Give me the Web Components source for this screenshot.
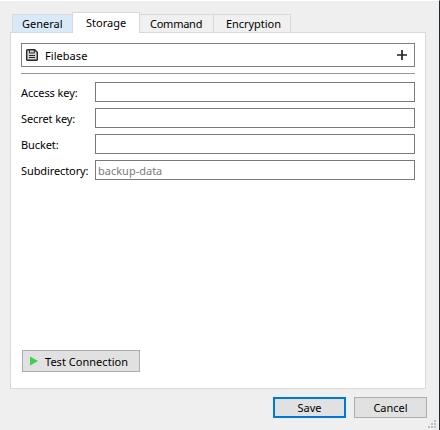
<!DOCTYPE html>
<html lang="en"><head><meta charset="utf-8"><title>Storage</title>
<style>html,body{margin:0;height:100%;overflow:hidden}body{font:11px/16px "Noto Sans","Open Sans",sans-serif;color:#000;background:#efefef}</style></head>
<body><storage-dialog></storage-dialog>
<script>
const define=(name,html,setup)=>customElements.define(name,class extends HTMLElement{
  connectedCallback(){
    if(this.shadowRoot)return;
    this.attachShadow({mode:"open"}).innerHTML=html;
    if(setup)setup(this,this.shadowRoot);
  }
});

define("tab-item",`<style>
:host{display:block;box-sizing:border-box;height:18px;border:1px solid #d9d9d9;border-bottom:0;margin-left:-1px;padding:1px 0 0 var(--pad,12px);background:#f0f0f0;white-space:nowrap}
:host([hot]){background:#d8eaf9;margin-left:0}
:host([selected]){height:21px;background:#fff;margin-bottom:-1px;padding-top:2px;z-index:1}
</style><slot></slot>`);

define("tab-strip",`<style>
:host{display:flex;align-items:flex-end;height:20px;padding-left:2px}
</style><slot></slot>`);

define("account-picker",`<style>
:host{display:flex;align-items:center;box-sizing:border-box;height:24px;border:1px solid #7c808a;padding:0 7px 0 4px}
span{flex:1;margin-left:7px;padding-top:2px;letter-spacing:.05px}
svg{display:block}
</style>
<svg width="12" height="12" viewBox="0 0 12 12"><path d="M1.6.7h7.1l2.6 2.6v7.1q0 .9-.9.9H1.6q-.9 0-.9-.9V1.6q0-.9.9-.9Z" fill="#d4d4d4" stroke="#292929" stroke-width="1.4"/><path d="M3.5 1v3h4.8V1M3 6.5h6M3 8.5h6" fill="none" stroke="#292929"/></svg>
<span><slot></slot></span>
<svg width="10" height="10" viewBox="0 0 10 10"><path d="M5 0v10M0 5h10" stroke="#222" stroke-width="1.7"/></svg>`);

define("field-row",`<style>
:host{display:flex;height:20px}
label{width:74px;padding-top:3px;box-sizing:border-box;white-space:nowrap;letter-spacing:-.1px}
.box{flex:1;box-sizing:border-box;border:1px solid #7a7a7a;background:#fff;padding:2px;color:#7b7b7b}
</style><label></label><div class="box"><slot></slot></div>`,(host,root)=>{root.querySelector("label").textContent=host.getAttribute("label")});

define("push-button",`<style>
:host{display:flex;align-items:center;justify-content:center;box-sizing:border-box;width:73px;height:21px;border:1px solid #adadad;background:#e1e1e1;padding-top:1px;white-space:nowrap}
:host([primary]){border:2px solid #0078d7}
:host([wide]){width:118px;height:22px;justify-content:flex-start;padding-left:7px;padding-top:2px;letter-spacing:.03px}
::slotted(svg){margin:-2px 7px 0 0}
</style><slot></slot>`);

define("size-grip",`<style>
:host{position:absolute;right:3px;bottom:2px;line-height:0}svg{display:block}
</style><svg width="8" height="8" fill="#bfbfbf"><path d="M6 0h2v2H6zM3 3h2v2H3zM6 3h2v2H6zM0 6h2v2H0zM3 6h2v2H3zM6 6h2v2H6z"/></svg>`);

define("storage-dialog",`<style>
:host{display:block;position:relative;box-sizing:border-box;width:440px;height:430px;padding:11px 13px 0 10px;border-top:1px solid #fff;border-right:1px solid #25282c;background:#efefef}
main{display:flex;flex-direction:column;box-sizing:border-box;width:416px;height:357px;border:1px solid #d9d9d9;background:#fff;padding:10px}
hr{width:100%;box-sizing:border-box;border:0;height:1px;background:#969696;margin:6px 0 8px}
.fields{display:grid;gap:6px}
main push-button{margin:auto 0 6px 1px}
footer{display:flex;justify-content:flex-end;gap:8px;padding-top:8px;margin-right:-1px}
</style>
<tab-strip>
<tab-item hot style="width:61px;--pad:9px">General</tab-item><tab-item selected style="width:68px;--pad:13px">Storage</tab-item><tab-item style="width:75px;--pad:10px;letter-spacing:-.25px">Command</tab-item><tab-item style="width:78px;--pad:12px;letter-spacing:-.05px">Encryption</tab-item>
</tab-strip>
<main>
<account-picker>Filebase</account-picker><hr>
<div class="fields"><field-row label="Access key:"></field-row><field-row label="Secret key:"></field-row><field-row label="Bucket:"></field-row><field-row label="Subdirectory:">backup-data</field-row></div>
<push-button wide><svg width="8" height="10" viewBox="0 0 8 10"><path d="M0 .5 8 5 0 9.5Z" fill="#41cd52"/></svg>Test Connection</push-button>
</main>
<footer><push-button primary>Save</push-button><push-button>Cancel</push-button></footer>
<size-grip></size-grip>`);
</script></body></html>
